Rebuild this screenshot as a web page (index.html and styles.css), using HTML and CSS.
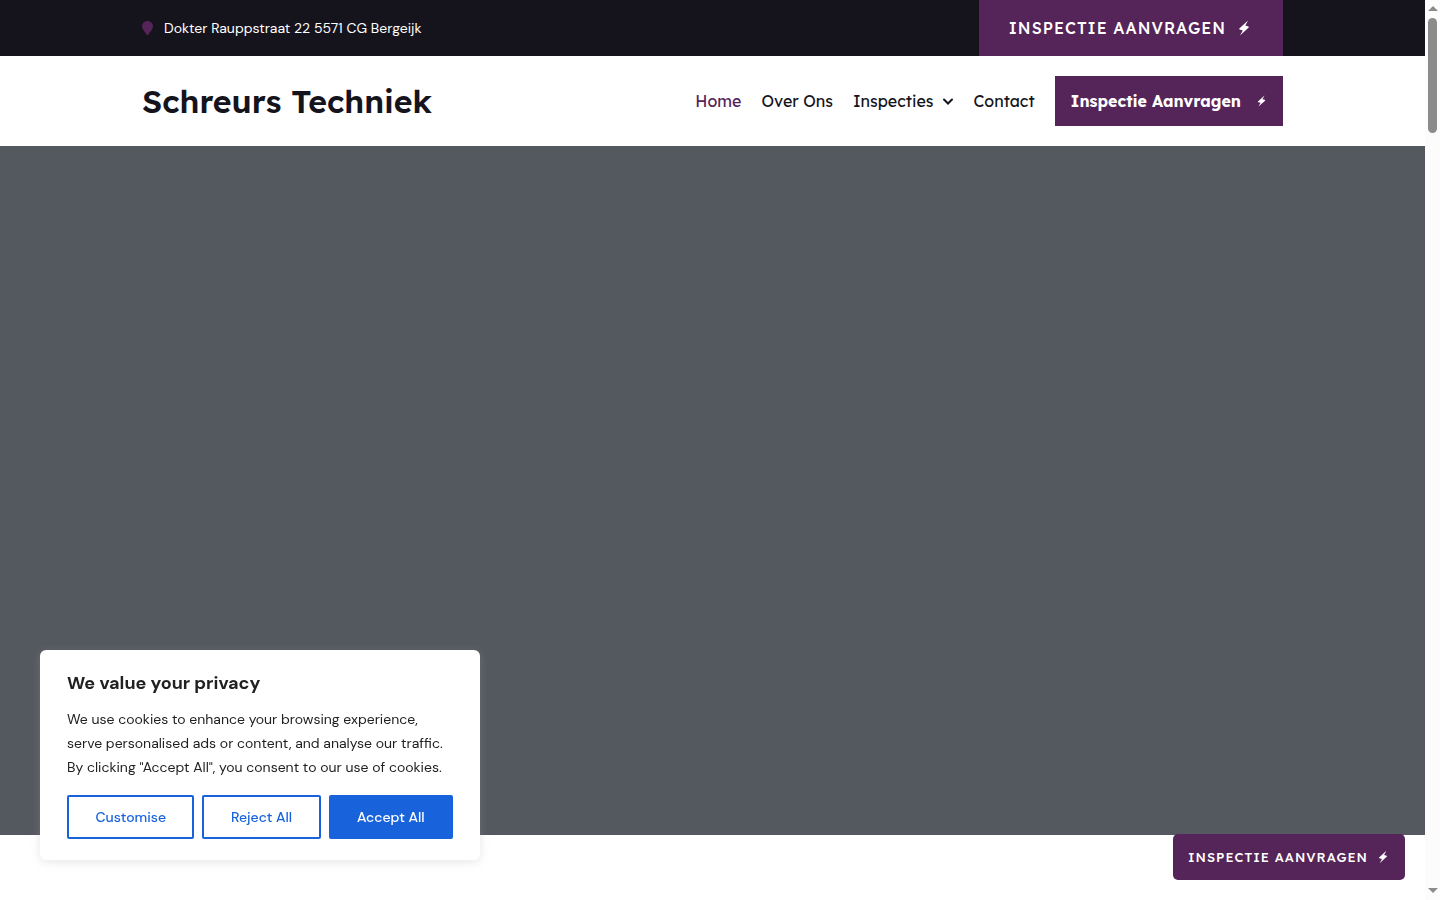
FILE: index.html
```html
<!DOCTYPE html>
<html lang="nl">
<head>
<meta charset="utf-8">
<meta name="viewport" content="width=device-width, initial-scale=1">
<title>Schreurs Techniek</title>
<link rel="stylesheet" href="styles.css">
</head>
<body>
<svg class="sprite" aria-hidden="true">
  <symbol id="bolt" viewBox="0 0 12 16"><path d="M10 .6 1.300 8.600Q.9 9.300 1.600 9.600L4.800 10.400 2 15.400 10.700 7.500Q11.200 6.800 10.400 6.400L7.300 5.500z"/></symbol>
</svg>
<div class="window">
  <div class="page">
    <div class="topbar">
      <div class="container topbar-row">
        <p class="address">
          <svg class="pin" viewBox="0 0 12 16" aria-hidden="true"><path d="M5.500 1C2.500 1 0 3.400 0 6.300c0 2.800 2.700 5.300 4.500 8.200q1 1.200 2 0C8.300 11.600 11 9.100 11 6.300 11 3.400 8.500 1 5.500 1z"/></svg>
          <span>Dokter Rauppstraat 22 5571 CG Bergeijk</span>
        </p>
        <a class="top-cta" href="#aanvragen">INSPECTIE AANVRAGEN <svg class="bolt-large" aria-hidden="true"><use href="#bolt"/></svg></a>
      </div>
    </div>
    <header class="header">
      <div class="container header-row">
        <a class="brand" href="#home">Schreurs Techniek</a>
        <nav class="nav">
          <a class="nav-link active" href="#home">Home</a>
          <a class="nav-link" href="#over">Over Ons</a>
          <a class="nav-link" href="#inspecties">Inspecties <svg class="chevron" viewBox="0 0 10 8" aria-hidden="true"><path d="M1 2.500 5 6.500 9 2.500"/></svg></a>
          <a class="nav-link" href="#contact">Contact</a>
          <a class="nav-cta" href="#aanvragen">Inspectie Aanvragen <svg class="bolt-small" aria-hidden="true"><use href="#bolt"/></svg></a>
        </nav>
      </div>
    </header>
    <main class="hero"></main>
    <div class="after-hero"></div>
  </div>
  <div class="scrollbar" aria-hidden="true">
    <span class="arrow-up"></span>
    <span class="track"><span class="thumb"></span></span>
    <span class="arrow-down"></span>
  </div>
</div>
<section class="cookies" aria-labelledby="cookie-title">
  <h2 class="cookie-title" id="cookie-title">We value your privacy</h2>
  <p class="cookie-text">We use cookies to enhance your browsing experience,<br>serve personalised ads or content, and analyse our traffic.<br>By clicking "Accept All", you consent to our use of cookies.</p>
  <div class="cookie-actions">
    <button class="cookie-button" type="button">Customise</button>
    <button class="cookie-button" type="button">Reject All</button>
    <button class="cookie-button accept" type="button">Accept All</button>
  </div>
</section>
<a class="floating-cta" href="#aanvragen">INSPECTIE AANVRAGEN <svg class="bolt-medium" aria-hidden="true"><use href="#bolt"/></svg></a>
</body>
</html>
```
FILE: styles.css
```css
* { box-sizing: border-box; }
body {
  margin: 0;
  background: #fff;
  color: #15141d;
  font-family: "DM Sans", Inter, sans-serif;
  font-size: 14px;
}
a { color: inherit; text-decoration: none; }
p, h2 { margin: 0; }
.sprite { position: absolute; width: 0; height: 0; }
.window { display: grid; grid-template-columns: 1fr 15px; min-height: 100vh; }
.page { display: flex; flex-direction: column; }
.container { width: 100%; max-width: 1141px; margin: 0 auto; }
.topbar { background: #15141d; color: #fff; }
.topbar-row { display: flex; justify-content: space-between; align-items: center; }
.address { display: flex; align-items: center; gap: 10px; line-height: 24px; }
.pin { width: 12px; height: 16px; fill: #552459; }
.top-cta, .nav, .brand, .floating-cta { font-family: Lexend, Inter, sans-serif; }
.top-cta {
  display: flex; align-items: center; gap: 12px;
  height: 56px; padding: 0 33px 0 30px;
  background: #552459; color: #fff;
  font-size: 16px; font-weight: 500; letter-spacing: 1px;
}
.bolt-large { width: 12px; height: 16px; fill: #fff; }
.bolt-medium { width: 10px; height: 14px; fill: #fff; }
.bolt-small { width: 9px; height: 12px; fill: #fff; }
.header-row { display: flex; justify-content: space-between; align-items: center; padding: 20px 0; }
.brand { font-size: 32px; font-weight: 600; line-height: 40px; }
.nav { display: flex; align-items: center; gap: 20px; font-size: 16px; font-weight: 400; }
.nav-link { display: flex; align-items: center; gap: 10px; }
.active { color: #552459; }
.chevron { width: 10px; height: 8px; overflow: visible; fill: none; stroke: #15141d; stroke-width: 2; stroke-linecap: round; }
.nav-cta {
  display: flex; align-items: center; gap: 16px;
  height: 50px; padding: 0 17px 0 16px;
  background: #552459; color: #fff; font-weight: 700;
}
.hero { flex: 1; background: #54585f; }
.after-hero { height: 65px; }
.scrollbar { display: flex; flex-direction: column; align-items: center; padding: 6px 0 7px; background: #fcfcfc; }
.arrow-up, .arrow-down { border: 5px solid transparent; }
.arrow-up { border-top: 0; border-bottom-color: #8b8b8b; }
.arrow-down { border-bottom: 0; border-top-color: #8b8b8b; }
.track { flex: 1; padding-top: 7px; }
.thumb { display: block; width: 9px; height: 115px; border-radius: 5px; background: #8b8b8b; }
.cookies {
  position: fixed; left: 40px; bottom: 40px; width: 440px;
  padding: 20px 27px 21px;
  border-radius: 6px; background: #fff; color: #212121;
  box-shadow: 0 2px 10px rgba(172, 171, 171, 0.3);
}
.cookie-title { font-size: 18px; font-weight: 700; line-height: 26px; }
.cookie-text { margin: 11px 0 16px; line-height: 24px; white-space: nowrap; }
.cookie-actions { display: flex; gap: 8px; }
.cookie-button {
  flex: 1 1 auto; height: 44px; padding: 0 24px;
  border: 2px solid #1863dc; border-radius: 2px;
  background: #fff; color: #1863dc;
  font-family: inherit; font-size: 14px; font-weight: 500;
}
.accept { background: #1863dc; color: #fff; }
.floating-cta {
  position: fixed; right: 35px; bottom: 20px;
  display: flex; align-items: center; gap: 10px;
  height: 46px; padding: 0 17px 0 15px;
  border-radius: 5px; background: #552459; color: #fff;
  font-size: 13px; font-weight: 500; letter-spacing: 1px;
}
```
